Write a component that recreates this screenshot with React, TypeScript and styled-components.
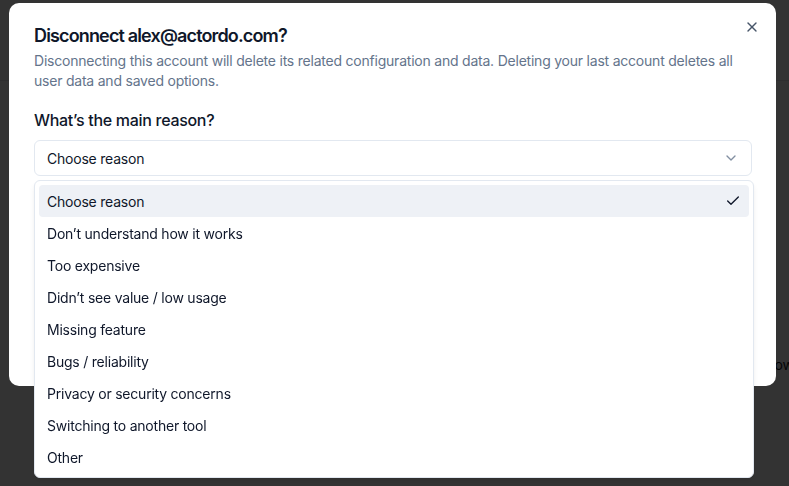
import React, { FC } from "react";
import styled, { createGlobalStyle } from "styled-components";
import { Check, ChevronDown, X } from "lucide-react";

const GlobalStyle = createGlobalStyle`
  html, body {
    margin: 0;
    padding: 0;
    background: #ffffff;
    font-family: Inter, "Noto Sans", sans-serif;
    -webkit-font-smoothing: antialiased;
  }
`;

const REASONS = [
  "Choose reason",
  "Don’t understand how it works",
  "Too expensive",
  "Didn’t see value / low usage",
  "Missing feature",
  "Bugs / reliability",
  "Privacy or security concerns",
  "Switching to another tool",
  "Other",
];

// page behind the overlay
const Page = styled.div`
  width: 789px;
  height: 486px;
  overflow: hidden;
  display: flex;
  flex-direction: column;
`;

const PageHeader = styled.div`
  height: 80px;
  flex-shrink: 0;
  border-bottom: 1px solid #e5e7eb;
`;

const PageRow = styled.div`
  width: 794px;
  margin-top: 275px;
  display: flex;
  justify-content: flex-end;
  font-size: 14px;
  color: #111827;
`;

const Overlay = styled.div`
  position: fixed;
  inset: 0;
  background: rgba(0, 0, 0, 0.8);
  display: flex;
  align-items: flex-start;
  padding: 3px 0 0 9px;
`;

const Dialog = styled.div`
  position: relative;
  box-sizing: border-box;
  width: 767px;
  height: 383px;
  padding: 24px 24px 24px 25px;
  background: #ffffff;
  border-radius: 10px;
  display: flex;
  flex-direction: column;
`;

const CloseButton = styled.button`
  position: absolute;
  top: 16px;
  right: 16px;
  width: 16px;
  height: 16px;
  padding: 0;
  border: 0;
  background: none;
  color: #475569;
  display: flex;
`;

const Header = styled.div`
  display: flex;
  flex-direction: column;
  gap: 6px;
`;

const Title = styled.h2`
  margin: 0;
  font-size: 18px;
  line-height: 18px;
  font-weight: 600;
  letter-spacing: -0.85px;
  color: #0f172a;
`;

const Description = styled.p`
  margin: 0;
  font-size: 14px;
  line-height: 20px;
  letter-spacing: -0.22px;
  color: #64748b;
`;

const Field = styled.div`
  position: relative;
  margin-top: 17px;
  display: flex;
  flex-direction: column;
  gap: 8px;
`;

const Label = styled.div`
  font-size: 16px;
  line-height: 24px;
  font-weight: 500;
  letter-spacing: -0.3px;
  color: #0f172a;
`;

const Trigger = styled.div`
  box-sizing: border-box;
  height: 36px;
  width: 718px;
  padding: 0 12px;
  border: 1px solid #e2e8f0;
  border-radius: 6px;
  display: flex;
  align-items: center;
  justify-content: space-between;
  font-size: 14px;
  letter-spacing: -0.22px;
  color: #0f172a;

  svg {
    color: #64748b;
    opacity: 0.8;
  }
`;

const Listbox = styled.div`
  position: absolute;
  top: 72px;
  left: 0;
  box-sizing: border-box;
  width: 720px;
  padding: 4px;
  background: #ffffff;
  border: 1px solid #e2e8f0;
  border-radius: 6px;
  box-shadow: 0 4px 6px -1px rgba(0, 0, 0, 0.08), 0 2px 4px -2px rgba(0, 0, 0, 0.06);
  display: flex;
  flex-direction: column;
`;

const Option = styled.div<{ $active?: boolean }>`
  height: 32px;
  padding: 0 8px;
  border-radius: 4px;
  display: flex;
  align-items: center;
  justify-content: space-between;
  font-size: 14px;
  letter-spacing: -0.22px;
  color: #0f172a;
  background: ${(p) => (p.$active ? "#eef1f6" : "transparent")};
`;

const App: FC = () => {
  const selected = REASONS[0];

  return (
    <>
      <GlobalStyle />
      <Page>
        <PageHeader />
        <PageRow>Follow</PageRow>
      </Page>
      <Overlay>
        <Dialog>
          <CloseButton aria-label="Close">
            <X size={16} strokeWidth={2} />
          </CloseButton>
          <Header>
            <Title>Disconnect alex@actordo.com?</Title>
            <Description>
              Disconnecting this account will delete its related configuration and data. Deleting your last account
              deletes all user data and saved options.
            </Description>
          </Header>
          <Field>
            <Label>What’s the main reason?</Label>
            <Trigger>
              <span>{selected}</span>
              <ChevronDown size={16} strokeWidth={2} />
            </Trigger>
            <Listbox role="listbox">
              {REASONS.map((reason) => (
                <Option key={reason} $active={reason === selected}>
                  <span>{reason}</span>
                  {reason === selected && <Check size={16} strokeWidth={2} />}
                </Option>
              ))}
            </Listbox>
          </Field>
        </Dialog>
      </Overlay>
    </>
  );
};

export default App;
